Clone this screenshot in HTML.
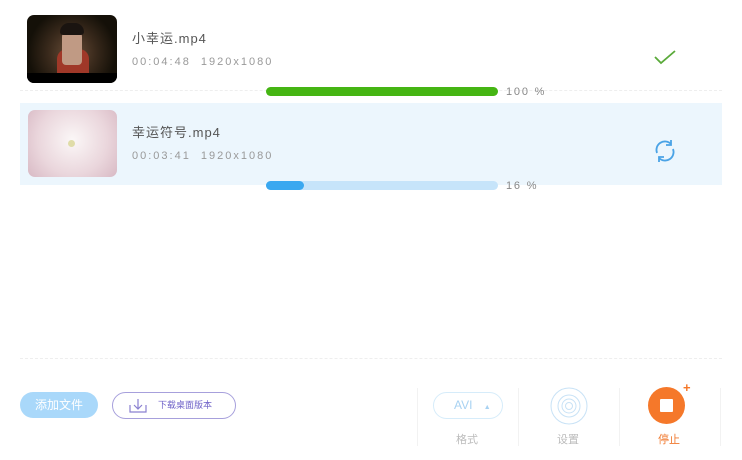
<!DOCTYPE html>
<html><head><meta charset="utf-8"><style>
*{margin:0;padding:0;box-sizing:border-box}
body{width:742px;height:460px;background:#fff;position:relative;overflow:hidden;font-family:"Liberation Sans","Noto Sans CJK SC",sans-serif}
.a{position:absolute}
.name{font-size:13px;color:#555;letter-spacing:1px}
.meta{font-size:11px;color:#999;letter-spacing:2px}
.pct{font-size:11px;color:#888;letter-spacing:1.8px}
</style></head><body>
<div class="a" style="left:27px;top:15px;width:90px;height:68px;border-radius:7px;background:radial-gradient(circle at 50% 55%,#6a4e38 0,#3a2a1c 40%,#141008 75%);overflow:hidden">
<div class="a" style="left:0;top:58px;width:90px;height:10px;background:#000"></div>
<div class="a" style="left:30px;top:34px;width:32px;height:24px;border-radius:10px 10px 0 0;background:#a03828"></div>
<div class="a" style="left:35px;top:12px;width:20px;height:38px;border-radius:10px 10px 4px 4px;background:#c09a84"></div>
<div class="a" style="left:33px;top:8px;width:24px;height:12px;border-radius:12px 12px 4px 4px;background:#1a1410"></div>
</div>
<div class="a name" style="left:132px;top:28px">小幸运.mp4</div>
<div class="a meta" style="left:132px;top:56px">00:04:48&nbsp; 1920x1080</div>
<svg class="a" style="left:652px;top:48px" width="26" height="18"><path d="M3 9 L9 15 L23 3" fill="none" stroke="#5aaa3a" stroke-width="1.8"/></svg>
<div class="a" style="left:20px;top:90px;width:702px;border-top:1px dashed #eee"></div>
<div class="a" style="left:266px;top:87px;width:232px;height:9px;border-radius:5px;background:#45b513"></div>
<div class="a pct" style="left:506px;top:86px">100 %</div>
<div class="a" style="left:20px;top:103px;width:702px;height:82px;background:#ecf6fd"></div>
<div class="a" style="left:28px;top:110px;width:89px;height:67px;border-radius:7px;background:radial-gradient(circle at 50% 45%,#fbf7f7 0,#ead6dc 60%,#d8b9c4 100%)">
<div class="a" style="left:40px;top:30px;width:7px;height:7px;border-radius:50%;background:#e0dca8"></div></div>
<div class="a name" style="left:132px;top:122px">幸运符号.mp4</div>
<div class="a meta" style="left:132px;top:150px">00:03:41&nbsp; 1920x1080</div>
<svg class="a" style="left:652px;top:138px" width="26" height="26" fill="none" stroke="#4aa3e6" stroke-width="1.8"><path d="M5 15 A8.5 8.5 0 0 1 19 6"/><path d="M21 11 A8.5 8.5 0 0 1 7 20"/><path d="M19 2 L19 7 L14 7"/><path d="M7 24 L7 19 L12 19"/></svg>
<div class="a" style="left:266px;top:181px;width:232px;height:9px;border-radius:5px;background:#c6e4fa"></div>
<div class="a" style="left:266px;top:181px;width:38px;height:9px;border-radius:5px;background:#3aa8f0"></div>
<div class="a pct" style="left:506px;top:180px">16 %</div>
<div class="a" style="left:20px;top:358px;width:702px;border-top:1px dashed #eee"></div>
<div class="a" style="left:20px;top:392px;width:78px;height:26px;border-radius:13px;background:#a9d8fa;color:#fff;font-size:12px;text-align:center;line-height:26px">添加文件</div>
<div class="a" style="left:112px;top:392px;width:124px;height:27px;border-radius:14px;border:1px solid #a7a0dc;color:#6f62c8;font-size:9px;line-height:25px;padding-left:45px">下载桌面版本</div>
<svg class="a" style="left:128px;top:397px" width="20" height="18" fill="none" stroke="#8a80d0" stroke-width="1.2"><path d="M2 8 V15 H18 V8"/><path d="M10 2 V12 M6 8 L10 12 L14 8"/></svg>
<div class="a" style="left:417px;top:388px;height:58px;border-left:1px solid #f2f2f2"></div>
<div class="a" style="left:518px;top:388px;height:58px;border-left:1px solid #f2f2f2"></div>
<div class="a" style="left:619px;top:388px;height:58px;border-left:1px solid #f2f2f2"></div>
<div class="a" style="left:720px;top:388px;height:58px;border-left:1px solid #f2f2f2"></div>
<div class="a" style="left:433px;top:392px;width:70px;height:27px;border-radius:14px;border:1px solid #d6ecfa;color:#a8d2f2;font-size:12px;line-height:25px;padding-left:20px">AVI <span style="font-size:7px;margin-left:8px">▲</span></div>
<div class="a" style="left:456px;top:431px;font-size:11px;color:#bbb">格式</div>
<svg class="a" style="left:550px;top:387px" width="38" height="38" fill="none" stroke="#c8e2f6" stroke-width="1"><circle cx="19" cy="19" r="18"/><circle cx="19" cy="19" r="11"/><circle cx="19" cy="19" r="7"/><circle cx="19" cy="19" r="3.5"/></svg>
<div class="a" style="left:557px;top:431px;font-size:11px;color:#bbb">设置</div>
<div class="a" style="left:648px;top:387px;width:37px;height:37px;border-radius:50%;background:#f5782a"></div>
<div class="a" style="left:660px;top:399px;width:13px;height:13px;background:#fff;border-radius:1px"></div>
<div class="a" style="left:683px;top:381px;color:#f5782a;font-size:13px;font-weight:bold;line-height:13px">+</div>
<div class="a" style="left:658px;top:431px;font-size:11px;color:#f07a30">停止</div>
</body></html>
